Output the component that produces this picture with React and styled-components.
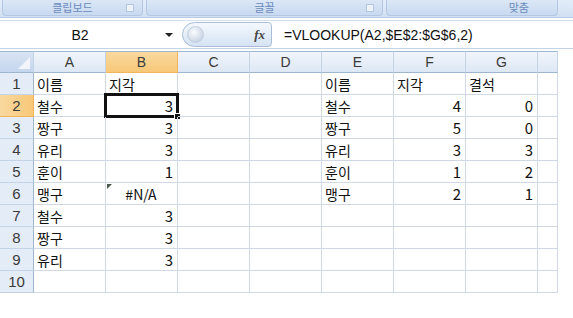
import React from "react";
import styled, { createGlobalStyle } from "styled-components";

const Global = createGlobalStyle`
  html, body { margin: 0; padding: 0; background: #fff; }
  body { font-family: "Noto Sans CJK KR", "Noto Sans", sans-serif; }
`;

const Page = styled.div`
  width: 573px;
  height: 318px;
  overflow: hidden;
  background: #fff;
`;

const Ribbon = styled.div`
  height: 17px;
  display: flex;
  gap: 3px;
  padding-left: 2px;
  background: linear-gradient(#e3edf9, #d1e0f3);
  border-bottom: 1px solid #b7cbe4;
`;

const Group = styled.div`
  position: relative;
  width: ${(p) => p.$w}px;
  height: 16px;
  border: 1px solid #b4c8e3;
  border-top: none;
  border-radius: 0 0 4px 4px;
  background: linear-gradient(#dbe7f6, #c8d9f0);
  display: flex;
  align-items: center;
  justify-content: ${(p) => p.$align || "center"};
  padding-right: ${(p) => p.$pr || 0}px;
  box-sizing: border-box;
  font-size: 11px;
  line-height: 1;
  color: #6a8bbb;
`;

const Launcher = styled.span`
  position: absolute;
  right: 8px;
  top: 4px;
  width: 6px;
  height: 6px;
  border: 1px solid #b3c5df;
  background: #eef3fa;
`;

const FormulaBar = styled.div`
  margin-top: 2px;
  height: 27px;
  display: flex;
  align-items: center;
  background: #fff;
  border-top: 1px solid #d6dfec;
  border-bottom: 1px solid #c5d3e6;
`;

const NameBox = styled.div`
  width: 160px;
  text-align: center;
  font-family: "Liberation Sans", Arial, sans-serif;
  font-size: 14px;
  color: #111;
`;

const DropArrow = styled.span`
  width: 0;
  height: 0;
  margin-left: 5px;
  border-left: 4px solid transparent;
  border-right: 4px solid transparent;
  border-top: 4px solid #222;
`;

const Pill = styled.div`
  margin-left: 9px;
  width: 90px;
  height: 25px;
  box-sizing: border-box;
  border: 1px solid #a9bcd8;
  border-radius: 13px 4px 4px 13px;
  background: linear-gradient(#f4f8fd, #d6e3f3);
  display: flex;
  align-items: center;
  justify-content: space-between;
  padding: 0 6px 0 4px;
`;

const Knob = styled.span`
  width: 15px;
  height: 15px;
  border-radius: 50%;
  background: radial-gradient(circle at 40% 35%, #fafcff, #b8c6d9);
  border: 1px solid #c4d0e0;
`;

const Fx = styled.span`
  font-family: "Liberation Serif", serif;
  font-style: italic;
  font-weight: bold;
  font-size: 13px;
  color: #444;
`;

const Formula = styled.div`
  margin-left: 12px;
  font-family: "Liberation Sans", Arial, sans-serif;
  font-size: 14px;
  color: #111;
`;

const Sheet = styled.div`
  margin-top: 2px;
  display: grid;
  grid-template-columns: 34px repeat(7, 72px) 20px;
  grid-template-rows: repeat(11, 22px);
  width: 558px;
`;

const ColHead = styled.div`
  box-sizing: border-box;
  border-right: 1px solid ${(p) => (p.$sel ? "#f2b45c" : "#c5d3e6")};
  border-bottom: 1px solid ${(p) => (p.$sel ? "#f2b45c" : "#9eb6ce")};
  border-top: 1px solid #9eb6ce;
  background: ${(p) =>
    p.$sel
      ? "linear-gradient(#f9d99f, #f7c878)"
      : "linear-gradient(#f1f5fb, #dde7f4)"};
  display: flex;
  align-items: center;
  justify-content: center;
  font-family: "Liberation Sans", Arial, sans-serif;
  font-size: 14px;
  color: #3a3a3a;
`;

const Corner = styled(ColHead)`
  position: relative;
  background: linear-gradient(#d9e4f3, #c4d6ee);
  &::after {
    content: "";
    position: absolute;
    right: 3px;
    bottom: 3px;
    border-left: 12px solid transparent;
    border-bottom: 12px solid #f2f6fc;
  }
`;

const RowHead = styled.div`
  box-sizing: border-box;
  border-right: 1px solid ${(p) => (p.$sel ? "#f2b45c" : "#9eb6ce")};
  border-bottom: 1px solid ${(p) => (p.$sel ? "#f2b45c" : "#c5d3e6")};
  background: ${(p) =>
    p.$sel ? "linear-gradient(90deg, #f9d99f, #f7c878)" : "#e4ecf7"};
  display: flex;
  align-items: center;
  justify-content: center;
  font-family: "Liberation Sans", Arial, sans-serif;
  font-size: 15px;
  color: #3a3a3a;
`;

const Cell = styled.div`
  position: relative;
  box-sizing: border-box;
  border-right: 1px solid #d0d7e5;
  border-bottom: 1px solid #d0d7e5;
  display: flex;
  align-items: center;
  justify-content: ${(p) => p.$align || "flex-start"};
  padding: 0 4px 0 3px;
  font-size: ${(p) => (p.$num ? 15 : 14)}px;
  color: #111;
  white-space: nowrap;
`;

const Active = styled.span`
  position: absolute;
  left: -2px;
  top: -2px;
  right: -2px;
  bottom: -2px;
  border: 3px solid #111;
  pointer-events: none;
  &::after {
    content: "";
    position: absolute;
    right: -5px;
    bottom: -5px;
    width: 5px;
    height: 5px;
    background: #111;
    border: 1px solid #fff;
  }
`;

const ErrMark = styled.span`
  position: absolute;
  left: 1px;
  top: 1px;
  border-right: 5px solid transparent;
  border-top: 5px solid #4a5a4a;
`;

const cols = ["A", "B", "C", "D", "E", "F", "G", ""];

const data = [
  ["이름", "지각", "", "", "이름", "지각", "결석"],
  ["철수", 3, "", "", "철수", 4, 0],
  ["짱구", 3, "", "", "짱구", 5, 0],
  ["유리", 3, "", "", "유리", 3, 3],
  ["훈이", 1, "", "", "훈이", 1, 2],
  ["맹구", "#N/A", "", "", "맹구", 2, 1],
  ["철수", 3, "", "", "", "", ""],
  ["짱구", 3, "", "", "", "", ""],
  ["유리", 3, "", "", "", "", ""],
  ["", "", "", "", "", "", ""],
];

export default function App() {
  return (
    <Page>
      <Global />
      <Ribbon>
        <Group $w={141}>
          클립보드
          <Launcher />
        </Group>
        <Group $w={237}>
          글꼴
          <Launcher />
        </Group>
        <Group $w={172} $align="flex-end" $pr={28}>
          맞춤
        </Group>
      </Ribbon>
      <FormulaBar>
        <NameBox>B2</NameBox>
        <DropArrow />
        <Pill>
          <Knob />
          <Fx>fx</Fx>
        </Pill>
        <Formula>=VLOOKUP(A2,$E$2:$G$6,2)</Formula>
      </FormulaBar>
      <Sheet>
        <Corner />
        {cols.map((c, i) => (
          <ColHead key={i} $sel={c === "B"}>
            {c}
          </ColHead>
        ))}
        {data.map((row, r) => (
          <React.Fragment key={r}>
            <RowHead $sel={r === 1}>{r + 1}</RowHead>
            {row.map((v, c) => {
              const isNum = typeof v === "number";
              const isErr = v === "#N/A";
              return (
                <Cell
                  key={c}
                  $num={isNum}
                  $align={isNum ? "flex-end" : isErr ? "center" : "flex-start"}
                >
                  {v}
                  {isErr && <ErrMark />}
                  {r === 1 && c === 1 && <Active />}
                </Cell>
              );
            })}
            <Cell />
          </React.Fragment>
        ))}
      </Sheet>
    </Page>
  );
}
